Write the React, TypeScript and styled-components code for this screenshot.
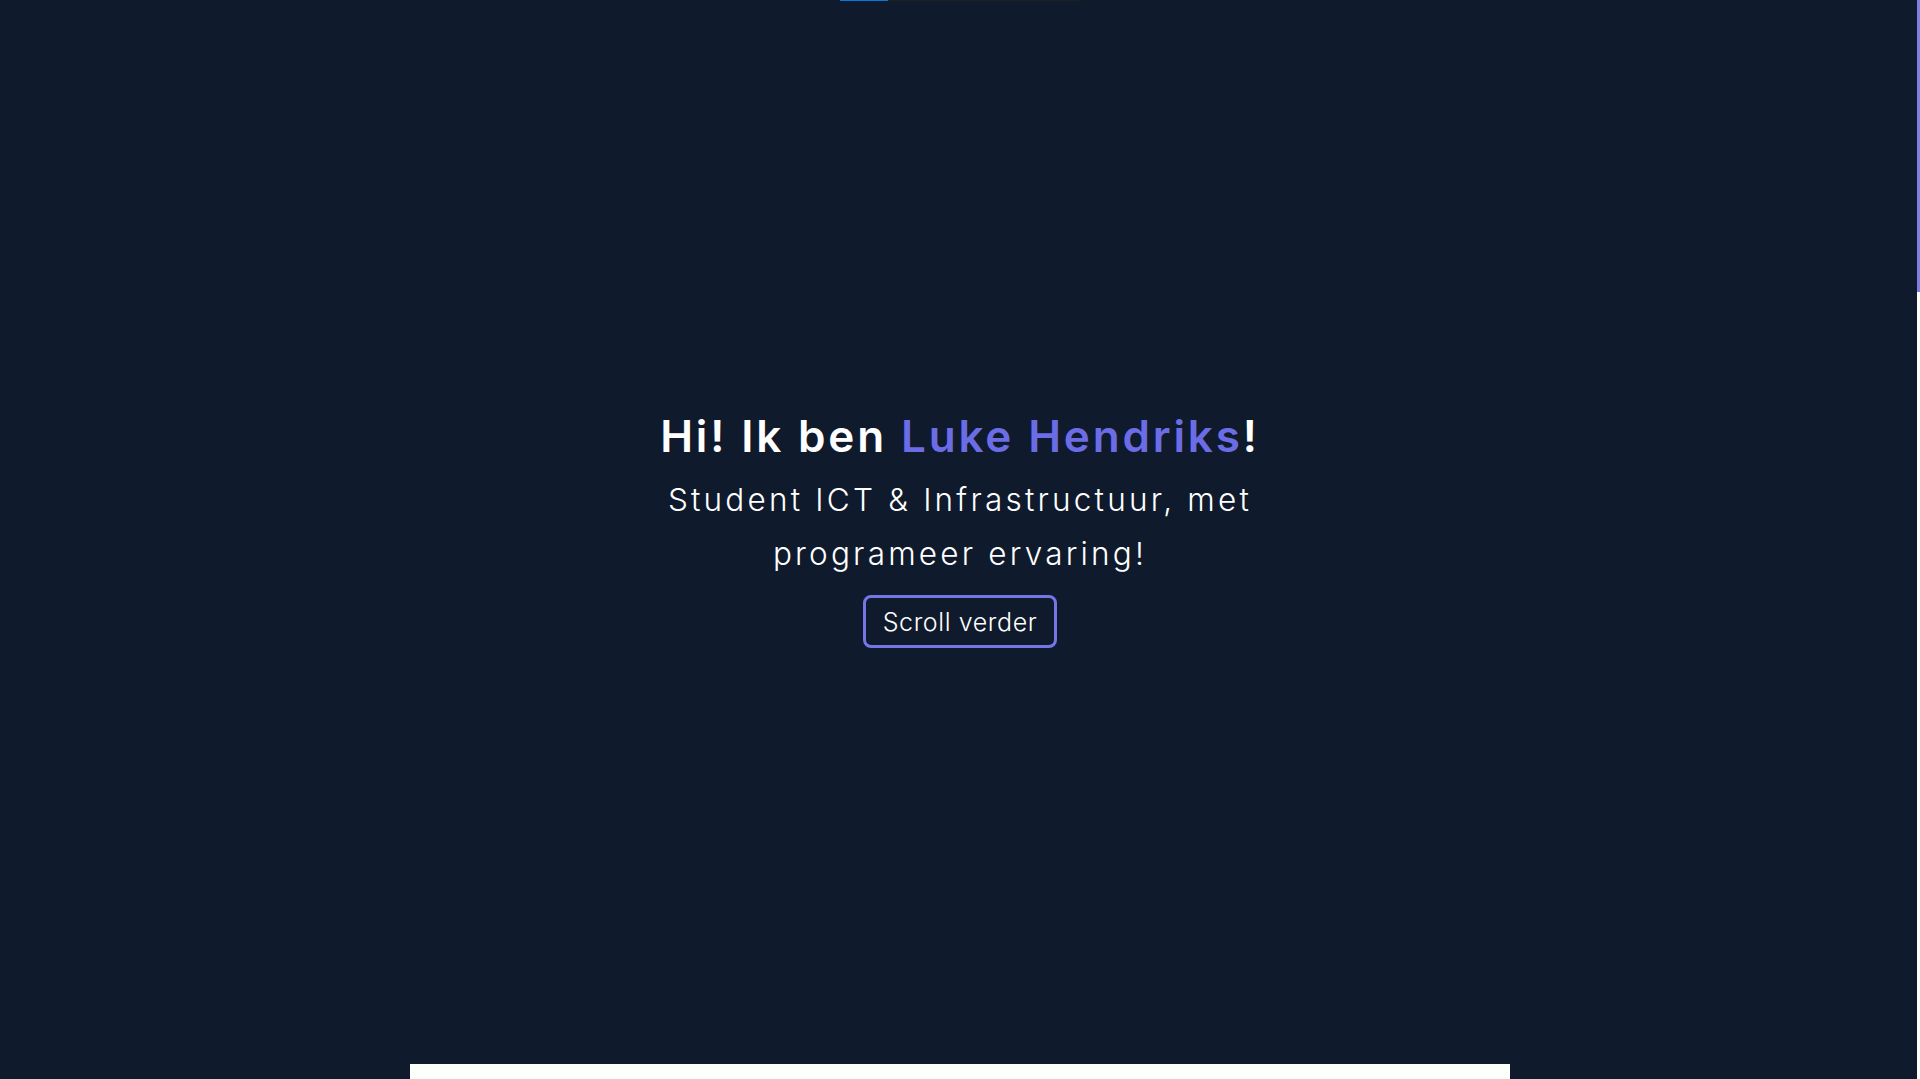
import React from "react";
import styled, { createGlobalStyle } from "styled-components";

const Global = createGlobalStyle`
  html, body {
    margin: 0;
    padding: 0;
    background: #0f1b2c;
  }
  body {
    font-family: "Inter", "Noto Sans", sans-serif;
    color: #ffffff;
  }
`;

const Progress = styled.div`
  position: fixed;
  top: 0;
  left: 840px;
  width: 241px;
  height: 1px;
  background: #1f1f1f;
  z-index: 10;
`;

const ProgressFill = styled.div`
  height: 100%;
  background: #0a78d8;
`;

const ScrollRail = styled.div`
  position: fixed;
  top: 0;
  right: 0;
  width: 3px;
  height: 100vh;
  background: #fdfffa;
  z-index: 10;
`;

const ScrollThumb = styled.div`
  width: 100%;
  height: 292px;
  background: #7f7fe6;
`;

const Page = styled.main`
  display: flex;
  flex-direction: column;
  align-items: center;
`;

const Hero = styled.section`
  width: 100%;
  height: 1064px;
  display: flex;
  flex-direction: column;
  align-items: center;
  justify-content: center;
  text-align: center;
  padding-bottom: 8px;
  box-sizing: border-box;
`;

const Title = styled.h1`
  margin: 0 0 9px;
  font-size: 44px;
  font-weight: 600;
  letter-spacing: 2.85px;
  line-height: 56px;
  color: #ffffff;
`;

const Accent = styled.span`
  color: #6c6de6;
`;

const Subtitle = styled.p`
  margin: 0;
  max-width: 640px;
  font-size: 31.5px;
  font-weight: 300;
  letter-spacing: 3.2px;
  line-height: 54px;
  color: #ffffff;
`;

const ScrollButton = styled.button`
  margin-top: 14px;
  width: 194px;
  height: 53px;
  border: 3px solid #7576e6;
  border-radius: 8px;
  background: transparent;
  color: #ffffff;
  font-family: inherit;
  font-size: 25px;
  font-weight: 300;
  letter-spacing: 0.6px;
  cursor: pointer;
`;

const Card = styled.section`
  width: 1100px;
  height: 2923px;
  background: #fdfffa;
`;

export default function App() {
  return (
    <>
      <Global />
      <Progress>
        <ProgressFill style={{ width: "20%" }} />
      </Progress>
      <ScrollRail>
        <ScrollThumb />
      </ScrollRail>
      <Page>
        <Hero>
          <Title>
            Hi! Ik ben <Accent>Luke Hendriks</Accent>!
          </Title>
          <Subtitle>Student ICT &amp; Infrastructuur, met programeer ervaring!</Subtitle>
          <ScrollButton>Scroll verder</ScrollButton>
        </Hero>
        <Card />
      </Page>
    </>
  );
}
